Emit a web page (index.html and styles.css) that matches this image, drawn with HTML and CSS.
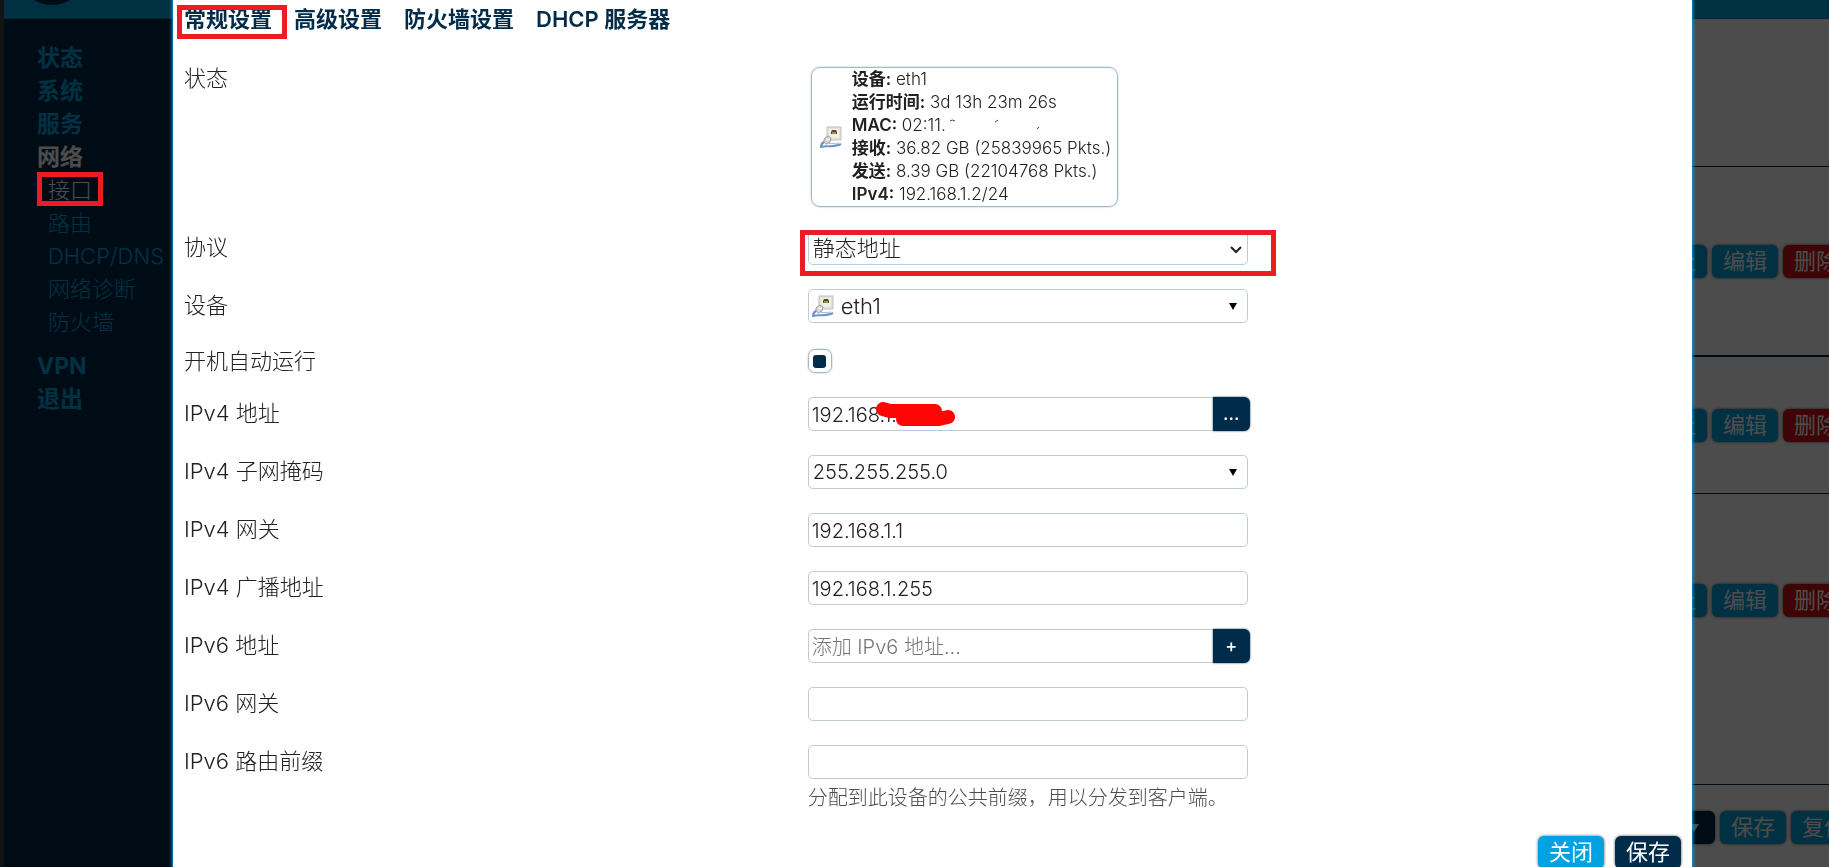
FILE: index.html
```html
<!DOCTYPE html>
<html lang="zh-CN">
  <head>
    <meta charset="utf-8">
    <title>接口 - LuCI</title>
    <meta name="viewport" content="width=device-width, initial-scale=1">
    <link rel="stylesheet" href="styles.css">
  </head>
  <body>
    <svg width="0" height="0" class="defs">
      <symbol id="ethernet" viewBox="0 0 22 22">
        <rect x="7" y="1" width="14" height="13" fill="#e2e2da" stroke="#c2c2ba"/>
        <rect x="9" y="3" width="10" height="9" fill="#efefe9"/>
        <path d="M11 8V6l1-2h4l1 2v2z" fill="#4c4c40"/>
        <path d="M12 6h4v2h-4z" fill="#a88f2a"/>
        <path d="M4 13l4-3 3 2-1 4-4 2-2-2z" fill="#d8d8d5" stroke="#9b9b9b"/>
        <path d="M6 12l2 2 2-1" fill="none" stroke="#fff"/>
        <path d="M4 16c-2 1-3 3-3 5 4-2 12 1 20-3" fill="none" stroke="#6c95c8" stroke-width="2"/>
        <path d="M5 18c5-1 9 0 14-1" fill="none" stroke="#a9c0dd"/>
      </symbol>
    </svg>

    <div class="page">
      <header>
        <svg class="logo" width="36" height="6"><path d="M0 0a35 35 0 0 0 36 0z"/></svg>
      </header>
      <nav>
        <ul class="menu">
          <li><a href="#">状态</a></li>
          <li><a href="#">系统</a></li>
          <li><a href="#">服务</a></li>
          <li class="active"><a href="#">网络</a>
            <ul>
              <li class="active"><a href="#">接口</a><span class="mark mark-menu"></span></li>
              <li><a href="#">路由</a></li>
              <li><a href="#">DHCP/DNS</a></li>
              <li><a href="#">网络诊断</a></li>
              <li><a href="#">防火墙</a></li>
            </ul>
          </li>
          <li><a href="#">VPN</a></li>
          <li><a href="#">退出</a></li>
        </ul>
      </nav>
      <main>
        <div class="iface head"></div>
        <div class="iface first">
          <button class="btn">停止</button>
          <button class="btn">编辑</button>
          <button class="btn remove">删除</button>
        </div>
        <div class="iface">
          <button class="btn">停止</button>
          <button class="btn">编辑</button>
          <button class="btn remove">删除</button>
        </div>
        <div class="iface tall">
          <button class="btn">停止</button>
          <button class="btn">编辑</button>
          <button class="btn remove">删除</button>
        </div>
        <div class="page-actions">
          <button class="btn dark more" aria-label="更多"><svg width="10" height="8"><path d="M0 0h10L5 8z"/></svg></button>
          <button class="btn">保存</button>
          <button class="btn">复位</button>
        </div>
      </main>
    </div>

    <div class="overlay">
      <form class="modal">
        <ul class="tabs">
          <li><a href="#">常规设置</a><span class="mark mark-tab"></span></li>
          <li><a href="#">高级设置</a></li>
          <li><a href="#">防火墙设置</a></li>
          <li><a href="#">DHCP 服务器</a></li>
        </ul>

        <div class="row status">
          <span class="label">状态</span>
          <div class="badge">
            <svg width="22" height="22"><use href="#ethernet"/></svg>
            <div>
              <p><b>设备:</b> eth1</p>
              <p><b>运行时间:</b> 3d 13h 23m 26s</p>
              <p><b>MAC:</b> 02:11.<svg class="mac" width="94" height="12"><path d="M4 2q2-2 5 0M49 3l3-2M93 8l-2 2"/></svg></p>
              <p><b>接收:</b> 36.82 GB (25839965 Pkts.)</p>
              <p><b>发送:</b> 8.39 GB (22104768 Pkts.)</p>
              <p><b>IPv4:</b> 192.168.1.2/24</p>
            </div>
          </div>
        </div>

        <div class="row">
          <label for="proto">协议</label>
          <div class="field">
            <select id="proto"><option>静态地址</option></select>
            <svg class="chevron" width="12" height="8"><path d="M1 1l5 5 5-5"/></svg>
            <span class="mark mark-field"></span>
          </div>
        </div>
        <div class="row">
          <label for="device">设备</label>
          <div class="field">
            <svg class="device-icon" width="22" height="22"><use href="#ethernet"/></svg>
            <select id="device" class="with-icon"><option>eth1</option></select>
            <svg class="arrow" width="8" height="7"><path d="M0 0h8L4 7z"/></svg>
          </div>
        </div>
        <div class="row check">
          <label for="auto">开机自动运行</label>
          <div><input type="checkbox" id="auto" checked></div>
        </div>
        <div class="row">
          <label for="ipaddr">IPv4 地址</label>
          <div class="field group">
            <input type="text" id="ipaddr" value="192.168.1.2">
            <button type="button">...</button>
            <svg class="scribble" width="80" height="24">
              <path d="M8 7L15 9H60M28 17H64L73 15"/>
            </svg>
          </div>
        </div>
        <div class="row">
          <label for="netmask">IPv4 子网掩码</label>
          <div class="field">
            <select id="netmask" class="address"><option>255.255.255.0</option></select>
            <svg class="arrow" width="8" height="7"><path d="M0 0h8L4 7z"/></svg>
          </div>
        </div>
        <div class="row">
          <label for="gateway">IPv4 网关</label>
          <div class="field"><input type="text" id="gateway" value="192.168.1.1"></div>
        </div>
        <div class="row">
          <label for="broadcast">IPv4 广播地址</label>
          <div class="field"><input type="text" id="broadcast" value="192.168.1.255"></div>
        </div>
        <div class="row">
          <label for="ip6addr">IPv6 地址</label>
          <div class="field group">
            <input type="text" id="ip6addr" placeholder="添加 IPv6 地址...">
            <button type="button">+</button>
          </div>
        </div>
        <div class="row">
          <label for="ip6gw">IPv6 网关</label>
          <div class="field"><input type="text" id="ip6gw"></div>
        </div>
        <div class="row">
          <label for="ip6prefix">IPv6 路由前缀</label>
          <div>
            <div class="field"><input type="text" id="ip6prefix"></div>
            <p class="help">分配到此设备的公共前缀，用以分发到客户端。</p>
          </div>
        </div>

        <div class="actions">
          <button type="button" class="btn">关闭</button>
          <button type="button" class="btn dark">保存</button>
        </div>
      </form>
    </div>
  </body>
</html>
```

FILE: styles.css
```css
* {
  box-sizing: border-box;
}
html {
  height: 100%;
  background: #404040;
}
body {
  margin: 0;
  height: 100%;
  overflow: hidden;
  font-family: Inter, "Noto Sans CJK SC", sans-serif;
  font-size: 22px;
  font-weight: 300;
  color: #212121;
}
ul {
  list-style: none;
  margin: 0;
  padding: 0;
}
p {
  margin: 0;
}
a {
  color: inherit;
  text-decoration: none;
}
b {
  font-weight: 600;
}
button, input, select {
  font: inherit;
  color: inherit;
}
.defs {
  position: absolute;
}

/* page behind the dialog */
.page {
  display: grid;
  grid-template-columns: 169px 1fr;
  grid-template-rows: 19px 1fr;
  min-height: 100%;
  margin-left: 4px;
  background: #fff;
}
header {
  grid-column: 1 / 3;
  background: #00a3e1;
  border-bottom: 1px solid #0086ba;
}
.logo {
  display: block;
  margin-left: 30px;
  fill: #002b49;
}
nav {
  background: #002b49;
  color: #00a3e1;
  padding: 23px 0 0 33px;
}
.menu li {
  line-height: 33px;
  font-size: 23px;
  font-weight: bold;
  white-space: nowrap;
  position: relative;
}
.menu ul {
  padding: 0 0 11px 11px;
}
.menu ul li {
  font-size: 22px;
  font-weight: 300;
}
.menu .active > a {
  color: #fff;
}
main {
  min-width: 0;
  overflow: hidden;
}
.iface {
  display: flex;
  align-items: center;
  justify-content: flex-end;
  gap: 5px;
  height: 137px;
  margin-right: -20px;
  border-bottom: 1px solid #002b49;
}
.iface.head {
  height: 148px;
}
.iface.first {
  height: 190px;
  border-bottom-width: 2px;
}
.iface.tall {
  height: 291px;
  align-items: flex-start;
  padding-top: 90px;
}
.page-actions {
  display: flex;
  justify-content: flex-end;
  gap: 5px;
  margin: 26px -28px 0 0;
}
.btn {
  flex: none;
  width: 66px;
  height: 33px;
  padding: 0;
  border: none;
  border-radius: 6px;
  background: #00a3e1;
  color: #fff;
  font-weight: 400;
  line-height: 33px;
  box-shadow: 0 0 3px #555;
}
.btn.dark {
  background: #002b49;
}
.btn.remove {
  background: #cc1111;
}
.btn.more {
  padding-right: 16px;
  text-align: right;
}
.btn.more svg {
  display: block;
  margin-left: auto;
  fill: #fff;
}

/* dialog */
.overlay {
  position: fixed;
  inset: 0;
  z-index: 10;
  padding: 0 137px 0 173px;
  background: rgba(0, 0, 0, 0.7);
  overflow: hidden;
}
.modal {
  min-height: 100%;
  padding: 0 11px 10px;
  background: #fff;
  box-shadow: 0 0 3px 1px #00a3e1;
}
.tabs {
  display: flex;
  align-items: flex-start;
  gap: 22px;
  height: 55px;
  padding-top: 3px;
  line-height: 32px;
  font-weight: 600;
  color: #002b49;
}
.tabs li {
  position: relative;
}
.row {
  display: grid;
  grid-template-columns: 5fr 7fr;
  padding: 12px 0;
  line-height: 32px;
}
.row.status {
  line-height: 22px;
}
.row.check {
  padding: 8px 0 6px;
  line-height: 36px;
}
.badge {
  display: flex;
  align-items: center;
  gap: 10px;
  width: max-content;
  margin-left: 3px;
  padding: 0 6px 0 8px;
  border: 1px solid #a5b8c8;
  border-radius: 9px;
  box-shadow: 0 0 2px #a5b8c8;
  font-size: 17px;
  line-height: 23px;
}
.mac {
  fill: none;
  stroke: #444;
}
.field {
  position: relative;
  display: flex;
  width: 440px;
}
.field input, .field select {
  flex: 1;
  min-width: 0;
  height: 34px;
  padding: 0 4px;
  border: 1px solid #bccbd7;
  border-radius: 5px;
  background: #fff;
  outline: none;
  appearance: none;
}
.field select.with-icon {
  padding-left: 32px;
}
.field input, .field select.address {
  font-size: 20px;
}
.field input {
  padding: 1px 3px 0;
}
.field input::placeholder {
  color: #757575;
}
.field.group {
  width: 442px;
}
.group input {
  border-right: none;
  border-radius: 5px 0 0 5px;
}
.group button {
  width: 37px;
  padding: 0;
  border: none;
  border-radius: 0 6px 6px 0;
  background: #002b49;
  color: #fff;
  font-size: 18px;
  font-weight: 500;
  box-shadow: 0 0 2px #002b49;
}
.chevron, .arrow, .device-icon, .scribble {
  position: absolute;
  pointer-events: none;
}
.chevron {
  right: 6px;
  top: 15px;
  fill: none;
  stroke: #212121;
  stroke-width: 2;
}
.arrow {
  right: 11px;
  top: 14px;
}
.device-icon {
  left: 4px;
  top: 6px;
}
.scribble {
  left: 67px;
  top: 5px;
  fill: none;
  stroke: #ff0505;
  stroke-width: 14;
  stroke-linecap: round;
  stroke-linejoin: round;
}
input[type="checkbox"] {
  appearance: none;
  display: grid;
  place-items: center;
  width: 24px;
  height: 24px;
  margin: 6px 0 0;
  border: 1px solid #a5b8c8;
  border-radius: 7px;
  box-shadow: 0 0 2px #a5b8c8;
}
input[type="checkbox"]:checked::before {
  content: "";
  width: 13px;
  height: 13px;
  border-radius: 3px;
  background: #002b49;
}
.help {
  padding-top: 4px;
  font-size: 20px;
  line-height: 30px;
  color: #4d4d4d;
}
.actions {
  display: flex;
  justify-content: flex-end;
  gap: 11px;
  padding-top: 11px;
}

/* red marker frames */
.mark {
  position: absolute;
  z-index: 20;
  border: 5px solid #ed1c24;
  pointer-events: none;
}
.mark-menu {
  inset: -2px auto 1px -11px;
  width: 66px;
}
.mark-tab {
  inset: 2px -15px -4px -7px;
}
.mark-field {
  inset: -1px -28px -11px -8px;
}
```
